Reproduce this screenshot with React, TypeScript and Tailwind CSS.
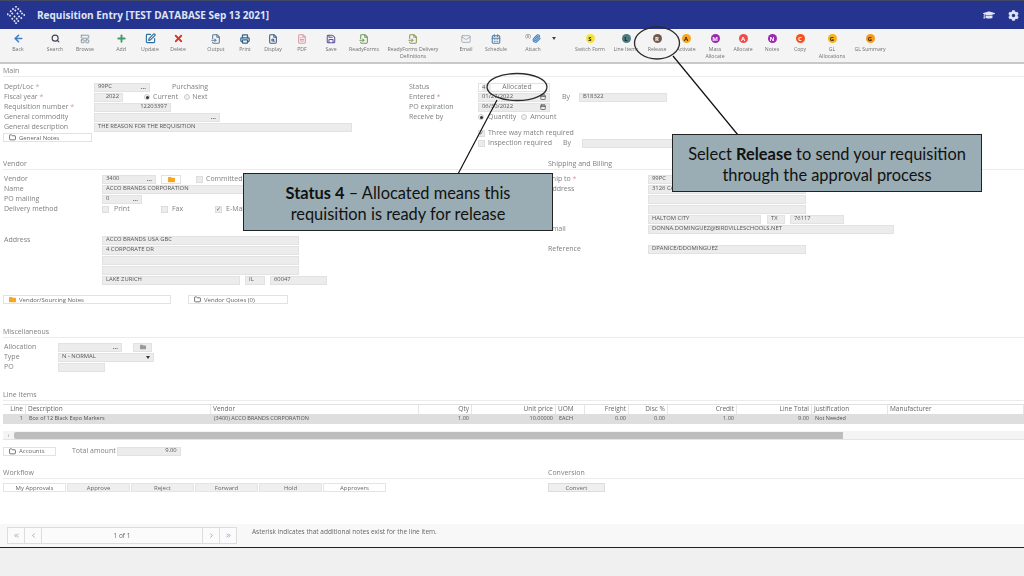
import { ReactNode } from "react";
import {
  ArrowLeft,
  Calendar,
  CalendarDays,
  ChevronLeft,
  ChevronRight,
  ChevronsLeft,
  ChevronsRight,
  FileInput,
  FileSearch,
  FileText,
  Folder,
  LayoutPanelTop,
  Mail,
  Paperclip,
  Plus,
  Printer,
  Save,
  Search,
  SquarePen,
  X,
} from "lucide-react";
import { FaCog, FaFolder, FaGraduationCap } from "react-icons/fa";

type Tool = {
  label: ReactNode;
  w: string;
  icon: ReactNode;
};

function Badge({ letter, color, text = "text-[#222]" }: { letter: string; color: string; text?: string }) {
  return (
    <span className={`flex size-[9px] items-center justify-center rounded-full text-[6px] font-bold leading-none ${color} ${text}`}>
      {letter}
    </span>
  );
}

const tools: Tool[] = [
  { label: "Back", w: "w-[36px]", icon: <ArrowLeft className="size-[11px] text-[#3f7fc0]" strokeWidth={3.5} /> },
  { label: "Search", w: "w-[30px] ml-[4px]", icon: <Search className="size-[9px] text-[#445]" strokeWidth={3} /> },
  { label: "Browse", w: "w-[30px]", icon: <LayoutPanelTop className="size-[10px] text-[#7a8a99]" /> },
  { label: "Add", w: "w-[28px] ml-[7px]", icon: <Plus className="size-[11px] text-[#3f9a6a]" strokeWidth={4} /> },
  { label: "Update", w: "w-[30px]", icon: <SquarePen className="size-[11px] text-[#2f6f9f]" strokeWidth={2.5} /> },
  { label: "Delete", w: "w-[26px]", icon: <X className="size-[11px] text-[#d9362b]" strokeWidth={4} /> },
  { label: "Output", w: "w-[30px] ml-[10px]", icon: <FileInput className="size-[10px] text-[#5a7a98]" strokeWidth={2.5} /> },
  { label: "Print", w: "w-[28px]", icon: <Printer className="size-[10px] text-[#33658a]" strokeWidth={3} /> },
  { label: "Display", w: "w-[28px]", icon: <FileSearch className="size-[10px] text-[#3a5f85]" strokeWidth={2.5} /> },
  { label: "PDF", w: "w-[30px]", icon: <FileText className="size-[10px] text-[#dd9aa4]" strokeWidth={2.5} /> },
  { label: "Save", w: "w-[28px]", icon: <Save className="size-[10px] text-[#5f559f]" strokeWidth={2.5} /> },
  { label: "ReadyForms", w: "w-[38px]", icon: <FileInput className="size-[10px] text-[#6f9a55]" strokeWidth={2.5} /> },
  {
    label: (
      <>
        ReadyForms Delivery
        <br />
        Definitions
      </>
    ),
    w: "w-[60px]",
    icon: <FileInput className="size-[10px] text-[#8a9a55]" strokeWidth={2.5} />,
  },
  { label: "Email", w: "w-[30px] ml-[8px]", icon: <Mail className="size-[10px] text-[#99a5b0]" /> },
  { label: "Schedule", w: "w-[30px]", icon: <CalendarDays className="size-[10px] text-[#4a7aa5]" strokeWidth={2.5} /> },
  {
    label: "Attach",
    w: "w-[44px]",
    icon: (
      <span className="flex items-center gap-px">
        <span className="-mt-[4px] text-[4.5px] text-[#555]">(0)</span>
        <Paperclip className="size-[9px] text-[#3f7fc0]" strokeWidth={3} />
      </span>
    ),
  },
  { label: "Switch Form", w: "w-[40px] ml-[15px]", icon: <Badge letter="S" color="bg-[#f3e23c]" /> },
  { label: "Line Items", w: "w-[32px]", icon: <Badge letter="L" color="bg-[#4d7a80]" /> },
  { label: "Release", w: "w-[30px]", icon: <Badge letter="R" color="bg-[#75594f]" text="text-white" /> },
  { label: "Activate", w: "w-[28px]", icon: <Badge letter="A" color="bg-[#f5a623]" /> },
  {
    label: (
      <>
        Mass
        <br />
        Allocate
      </>
    ),
    w: "w-[30px]",
    icon: <Badge letter="M" color="bg-[#9c27b0]" text="text-white" />,
  },
  { label: "Allocate", w: "w-[26px]", icon: <Badge letter="A" color="bg-[#ef4c4c]" text="text-white" /> },
  { label: "Notes", w: "w-[32px]", icon: <Badge letter="N" color="bg-[#9c27b0]" text="text-white" /> },
  { label: "Copy", w: "w-[24px]", icon: <Badge letter="C" color="bg-[#f4511e]" text="text-white" /> },
  {
    label: (
      <>
        GL
        <br />
        Allocations
      </>
    ),
    w: "w-[36px] ml-[2px]",
    icon: <Badge letter="G" color="bg-[#f5b21b]" />,
  },
  { label: "GL Summary", w: "w-[40px]", icon: <Badge letter="G" color="bg-[#f59a1b]" /> },
];

function Label({ children, className = "" }: { children: ReactNode; className?: string }) {
  return <span className={`whitespace-nowrap text-[7px] leading-[10px] text-[#808080] ${className}`}>{children}</span>;
}

function Req() {
  return <span className="text-[#d99]"> *</span>;
}

function Field({
  w,
  children,
  right,
  dots,
  cal,
  className = "",
}: {
  w: string;
  children?: ReactNode;
  right?: boolean;
  dots?: boolean;
  cal?: boolean;
  className?: string;
}) {
  return (
    <div
      className={`flex h-[9px] shrink-0 items-center border border-[#e2e2e2] bg-[#ececec] px-[3px] text-[5.85px] leading-none text-[#555] ${w} ${className}`}
    >
      <span className={`flex-1 whitespace-nowrap ${right ? "text-right" : ""}`}>{children}</span>
      {dots && <span className="text-[6px] font-bold leading-[4px] text-[#555]">...</span>}
      {cal && <Calendar className="size-[6px] text-[#555]" strokeWidth={3} />}
    </div>
  );
}

function Row({ children, className = "" }: { children: ReactNode; className?: string }) {
  return <div className={`flex h-[10px] items-center ${className}`}>{children}</div>;
}

function Radio({ on }: { on?: boolean }) {
  return (
    <span className="flex size-[6px] shrink-0 items-center justify-center rounded-full border border-[#ccc] bg-[#f0f0f0]">
      {on && <span className="size-[3px] rounded-full bg-[#333]" />}
    </span>
  );
}

function Check({ on }: { on?: boolean }) {
  return (
    <span className="flex size-[7px] shrink-0 items-center justify-center border border-[#ddd] bg-[#ececec] text-[6px] leading-none text-[#666]">
      {on ? "✓" : ""}
    </span>
  );
}

function NoteButton({ w, label, filled }: { w: string; label: string; filled?: boolean }) {
  return (
    <div className={`flex h-[9px] items-center gap-[3px] border border-[#e2e2e2] bg-white px-[5px] text-[6px] leading-none text-[#666] ${w}`}>
      {filled ? <FaFolder className="size-[7px] text-[#f5a623]" /> : <Folder className="size-[7px] text-[#444]" strokeWidth={2.5} />}
      {label}
    </div>
  );
}

function SectionTitle({ children, className = "" }: { children: ReactNode; className?: string }) {
  return <div className={`h-[10px] border-b border-[#ececec] pb-[1px] text-[7px] leading-[8px] text-[#808080] ${className}`}>{children}</div>;
}

function TabButton({ label, white }: { label: string; white?: boolean }) {
  return (
    <div
      className={`flex h-[9px] w-[63px] items-center justify-center border border-[#e4e4e4] text-[6px] leading-none text-[#666] ${white ? "bg-white" : "bg-[#efefef]"}`}
    >
      {label}
    </div>
  );
}

const columns = "grid grid-cols-[23px_185px_208px_53px_84px_29px_44px_39px_69px_75px_76px_136px]";

function LineItems() {
  const head = ["Line", "Description", "Vendor", "Qty", "Unit price", "UOM", "Freight", "Disc %", "Credit", "Line Total", "Justification", "Manufacturer"];
  const row = ["1", "Box of 12 Black Expo Markers", "(3400) ACCO BRANDS CORPORATION", "1.00", "10.00000", "EACH", "0.00", "0.00", "1.00", "9.00", "Not Needed", ""];
  const rightCols = [0, 3, 4, 6, 7, 8, 9];
  return (
    <div className="ml-[3px] mt-[3px] border-t border-[#e0e0e0]">
      <div className={`${columns} h-[9px] items-center`}>
        {head.map((h, i) => (
          <span
            key={h}
            className={`h-full whitespace-nowrap border-r border-[#e6e6e6] px-[2px] text-[6.5px] leading-[8px] text-[#666] ${rightCols.includes(i) ? "text-right" : ""}`}
          >
            {h}
          </span>
        ))}
      </div>
      <div className={`${columns} h-[10px] items-center bg-[#dedede]`}>
        {row.map((c, i) => (
          <span
            key={i}
            className={`whitespace-nowrap px-[3px] text-[5.5px] leading-none text-[#555] ${rightCols.includes(i) ? "text-right" : ""}`}
          >
            {c}
          </span>
        ))}
      </div>
      <div className="mt-[7px] flex h-[9px] items-center border-b border-[#e4e4e4] bg-[#f4f4f4]">
        <span className="w-[11px] text-center text-[5px] leading-none text-[#777]">‹</span>
        <div className="h-[7px] w-[829px] rounded-l-[2px] bg-[#bdbdbd]" />
      </div>
    </div>
  );
}

function PagerCell({ w, children, border = true }: { w: string; children: ReactNode; border?: boolean }) {
  return (
    <div className={`flex h-full items-center justify-center text-[6.5px] text-[#666] ${w} ${border ? "border-r border-[#ddd]" : ""}`}>
      {children}
    </div>
  );
}

function Logo() {
  const dots = [
    [12, 1], [8, 4], [15, 4], [5, 7], [11, 6], [18, 7], [1, 11], [7, 10], [14, 10],
    [20, 10], [23, 12], [4, 13], [10, 14], [16, 14], [7, 17], [13, 17], [19, 16], [10, 20], [15, 20], [12, 23],
  ];
  return (
    <svg viewBox="0 0 24 24" className="size-[18px]">
      {dots.map(([x, y], i) => (
        <rect key={i} x={x - 1.1} y={y - 1.1} width="2.2" height="2.2" fill="#e6e9f8" transform={`rotate(45 ${x} ${y})`} />
      ))}
    </svg>
  );
}

export default function App() {
  return (
    <div
      className="relative flex h-[576px] w-[1024px] flex-col overflow-hidden bg-white"
      style={{ fontFamily: '"Open Sans", "Noto Sans", sans-serif' }}
    >
      <div className="flex min-h-0 flex-1 flex-col blur-[0.35px]">
        <header className="flex h-[29px] shrink-0 items-center border-t border-[#444a66] bg-[#25358f] pl-[7px] pr-[4px]">
          <Logo />
          <h1 className="ml-[12px] text-[10px] font-bold leading-none text-[#dfe4f7]">Requisition Entry [TEST DATABASE Sep 13 2021]</h1>
          <div className="ml-auto flex items-center gap-[13px] pr-[1px]">
            <FaGraduationCap className="size-[12px] text-[#dfe4f7]" />
            <FaCog className="size-[11px] text-[#dfe4f7]" />
          </div>
        </header>

        <nav className="flex h-[35px] shrink-0 items-start border-b-2 border-[#c9c9c9] bg-[#f4f4f4] pt-[4px]">
          {tools.map((t, i) => (
            <div key={i} className={`relative flex shrink-0 flex-col items-center ${t.w}`}>
              <div className="flex h-[11px] items-center">{t.icon}</div>
              <span className="mt-[2px] whitespace-nowrap text-center text-[5.2px] leading-[7px] text-[#707070]">{t.label}</span>
              {t.label === "Attach" && (
                <span className="absolute right-[-1px] top-[4px] border-x-[2.5px] border-t-[3px] border-x-transparent border-t-[#444]" />
              )}
            </div>
          ))}
        </nav>

        <main className="flex min-h-0 flex-1 flex-col">
          <SectionTitle className="ml-[3px] mt-[3px]">Main</SectionTitle>

          <div className="mt-[5px] flex h-[66px]">
            <div className="w-[409px] shrink-0 pl-[4px]">
              <Row>
                <Label className="w-[90px]">Dept/Loc<Req /></Label>
                <Field w="w-[56px]" dots>99PC</Field>
                <Label className="ml-[22px]">Purchasing</Label>
              </Row>
              <Row>
                <Label className="w-[90px]">Fiscal year<Req /></Label>
                <Field w="w-[29px]" right>2022</Field>
                <span className="ml-[21px]"><Radio on /></span>
                <Label className="ml-[3px]">Current</Label>
                <span className="ml-[6px]"><Radio /></span>
                <Label className="ml-[2px]">Next</Label>
              </Row>
              <Row>
                <Label className="w-[90px]">Requisition number<Req /></Label>
                <Field w="w-[77px]" right>12203397</Field>
              </Row>
              <Row>
                <Label className="w-[90px]">General commodity</Label>
                <Field w="w-[126px]" dots />
              </Row>
              <Row>
                <Label className="w-[90px]">General description</Label>
                <Field w="w-[258px]">THE REASON FOR THE REQUISITION</Field>
              </Row>
              <div className="-ml-px mt-px">
                <NoteButton w="w-[89px]" label="General Notes" />
              </div>
            </div>

            <div className="flex-1">
              <Row>
                <Label className="w-[69px]">Status</Label>
                <Field w="w-[72px]" className="bg-white">
                  <span className="bg-[#ececec] pr-[6px]">4</span>
                  <span className="ml-[11px] text-[6.8px] text-[#777]">Allocated</span>
                </Field>
              </Row>
              <Row>
                <Label className="w-[69px]">Entered<Req /></Label>
                <Field w="w-[72px]" cal>01/27/2022</Field>
                <Label className="ml-[12px] w-[17px]">By</Label>
                <Field w="w-[88px]">B18322</Field>
              </Row>
              <Row>
                <Label className="w-[69px]">PO expiration</Label>
                <Field w="w-[72px]" cal>06/30/2022</Field>
              </Row>
              <Row>
                <Label className="w-[69px]">Receive by</Label>
                <Radio on />
                <Label className="ml-[4px]">Quantity</Label>
                <span className="ml-[5px]"><Radio /></span>
                <Label className="ml-[3px]">Amount</Label>
              </Row>
              <Row className="mt-[6px] pl-[69px]">
                <Check on />
                <Label className="ml-[3px]">Three way match required</Label>
              </Row>
              <Row className="pl-[69px]">
                <Check />
                <Label className="ml-[3px] w-[75px]">Inspection required</Label>
                <Label className="w-[19px]">By</Label>
                <Field w="w-[200px]" />
              </Row>
            </div>
          </div>

          <div className="mt-[12px] flex">
            <div className="w-[548px] shrink-0 pl-[3px]">
              <SectionTitle>Vendor</SectionTitle>
              <div className="mt-[4px] pl-px">
                <Row>
                  <Label className="w-[98px]">Vendor</Label>
                  <Field w="w-[54px]" dots>3400</Field>
                  <span className="ml-[5px] flex h-[9px] w-[20px] items-center justify-center border border-[#e2e2e2] bg-white">
                    <FaFolder className="size-[7px] text-[#f5a623]" />
                  </span>
                  <span className="ml-[15px]"><Check /></span>
                  <Label className="ml-[3px]">Committed</Label>
                </Row>
                <Row>
                  <Label className="w-[98px]">Name</Label>
                  <Field w="w-[300px]">ACCO BRANDS CORPORATION</Field>
                </Row>
                <Row>
                  <Label className="w-[98px]">PO mailing</Label>
                  <Field w="w-[40px]" dots>0</Field>
                </Row>
                <Row>
                  <Label className="w-[98px]">Delivery method</Label>
                  <Check />
                  <Label className="ml-[5px] w-[47px]">Print</Label>
                  <Check />
                  <Label className="ml-[4px] w-[43px]">Fax</Label>
                  <Check on />
                  <Label className="ml-[4px]">E-Mail</Label>
                </Row>
                <Row className="mt-[21px]">
                  <Label className="w-[98px]">Address</Label>
                  <Field w="w-[197px]">ACCO BRANDS USA GBC</Field>
                </Row>
                <Row className="pl-[98px]"><Field w="w-[197px]">4 CORPORATE DR</Field></Row>
                <Row className="pl-[98px]"><Field w="w-[197px]" /></Row>
                <Row className="pl-[98px]"><Field w="w-[197px]" /></Row>
                <Row className="gap-[5px] pl-[98px]">
                  <Field w="w-[138px]">LAKE ZURICH</Field>
                  <Field w="w-[20px]">IL</Field>
                  <Field w="w-[57px]">60047</Field>
                </Row>
              </div>
              <div className="mt-[10px] flex gap-[17px]">
                <NoteButton w="w-[168px]" label="Vendor/Sourcing Notes" filled />
                <NoteButton w="w-[100px]" label="Vendor Quotes (0)" />
              </div>
            </div>

            <div className="flex-1">
              <SectionTitle>Shipping and Billing</SectionTitle>
              <div className="mt-[4px]">
                <Row>
                  <Label className="w-[100px]">Ship to<Req /></Label>
                  <Field w="w-[158px]">99PC</Field>
                </Row>
                <Row>
                  <Label className="w-[100px]">Address</Label>
                  <Field w="w-[158px]">3126 CALLOWAY DR</Field>
                </Row>
                <Row className="pl-[100px]"><Field w="w-[158px]" /></Row>
                <Row className="pl-[100px]"><Field w="w-[158px]" /></Row>
                <Row className="pl-[100px]">
                  <Field w="w-[113px]">HALTOM CITY</Field>
                  <Field w="w-[18px]" className="ml-[6px]">TX</Field>
                  <Field w="w-[54px]" className="ml-[5px]">76117</Field>
                </Row>
                <Row>
                  <Label className="w-[100px]">Email</Label>
                  <Field w="w-[246px]">DONNA.DOMINGUEZ@BIRDVILLESCHOOLS.NET</Field>
                </Row>
                <Row className="mt-[10px]">
                  <Label className="w-[100px]">Reference</Label>
                  <Field w="w-[158px]">DPANICE/DDOMINGUEZ</Field>
                </Row>
              </div>
            </div>
          </div>

          <SectionTitle className="ml-[3px] mt-[24px]">Miscellaneous</SectionTitle>
          <div className="mt-[4px] pl-[4px]">
            <Row>
              <Label className="w-[54px]">Allocation</Label>
              <Field w="w-[64px]" dots />
              <span className="ml-[11px] flex h-[9px] w-[19px] items-center justify-center border border-[#e2e2e2] bg-[#ececec]">
                <FaFolder className="size-[6px] text-[#999]" />
              </span>
            </Row>
            <Row>
              <Label className="w-[54px]">Type</Label>
              <Field w="w-[96px]">
                <span className="flex items-center justify-between">
                  N - NORMAL
                  <span className="border-x-[2px] border-t-[3px] border-x-transparent border-t-[#333]" />
                </span>
              </Field>
            </Row>
            <Row>
              <Label className="w-[54px]">PO</Label>
              <Field w="w-[47px]" />
            </Row>
          </div>

          <SectionTitle className="ml-[3px] mt-[19px]">Line Items</SectionTitle>
          <LineItems />

          <div className="ml-[3px] mt-[6px] flex items-center">
            <NoteButton w="w-[53px]" label="Accounts" />
            <Label className="ml-[16px]">Total amount</Label>
            <Field w="w-[64px]" right className="ml-px">9.00</Field>
          </div>

          <div className="mt-[13px] flex">
            <div className="w-[548px] shrink-0 pl-[3px]">
              <SectionTitle>Workflow</SectionTitle>
              <div className="mt-[4px] flex gap-px">
                <TabButton label="My Approvals" white />
                <TabButton label="Approve" />
                <TabButton label="Reject" />
                <TabButton label="Forward" />
                <TabButton label="Hold" />
                <TabButton label="Approvers" white />
              </div>
            </div>
            <div className="flex-1">
              <SectionTitle>Conversion</SectionTitle>
              <div className="mt-[4px] flex h-[9px] w-[57px] items-center justify-center border border-[#ddd] bg-[#efefef] text-[6px] leading-none text-[#666]">
                Convert
              </div>
            </div>
          </div>
        </main>

        <footer className="flex h-[23px] shrink-0 items-start bg-[#f8f8f8] pl-[7px] pt-[3px]">
          <div className="flex h-[17px] w-[230px] border border-[#ddd] bg-[#fbfbfb]">
            <PagerCell w="w-[17px]"><ChevronsLeft className="size-[7px] text-[#777]" /></PagerCell>
            <PagerCell w="w-[17px]"><ChevronLeft className="size-[7px] text-[#777]" /></PagerCell>
            <PagerCell w="w-[161px]">1 of 1</PagerCell>
            <PagerCell w="w-[17px]"><ChevronRight className="size-[7px] text-[#777]" /></PagerCell>
            <PagerCell w="w-[16px]" border={false}><ChevronsRight className="size-[7px] text-[#3f7fc0]" /></PagerCell>
          </div>
          <span className="ml-[15px] text-[6.5px] leading-[10px] text-[#666]">Asterisk indicates that additional notes exist for the line item.</span>
        </footer>
      </div>

      <div className="h-[29px] shrink-0 border-t border-[#222] bg-[#f0f0f0]" />

      {/* annotations over the form */}
      <svg viewBox="0 0 1024 576" className="pointer-events-none absolute inset-0 size-full">
        <ellipse cx="517" cy="87" rx="30" ry="13.5" fill="none" stroke="#2b2b2b" strokeWidth="1.3" />
        <ellipse cx="657" cy="43" rx="22.5" ry="16" fill="none" stroke="#2b2b2b" strokeWidth="1.3" />
        <line x1="497" y1="100" x2="458" y2="174" stroke="#111" strokeWidth="1.2" />
        <line x1="673" y1="56" x2="738" y2="135" stroke="#111" strokeWidth="1.2" />
      </svg>

      <div
        className="absolute left-[243px] top-[173px] flex h-[58px] w-[310px] flex-col items-center justify-center border border-[#222] bg-[#9aadb4] pt-[1px] text-[16.4px] leading-[21px] text-[#111]"
        style={{ fontFamily: "Lato, sans-serif" }}
      >
        <div><b>Status 4</b> – Allocated means this</div>
        <div>requisition is ready for release</div>
      </div>
      <div
        className="absolute left-[672px] top-[134px] flex h-[58px] w-[310px] flex-col items-center justify-center border border-[#222] bg-[#9aadb4] pt-[1px] text-[16.4px] leading-[21px] text-[#111]"
        style={{ fontFamily: "Lato, sans-serif" }}
      >
        <div>Select <b>Release</b> to send your requisition</div>
        <div>through the approval process</div>
      </div>
    </div>
  );
}
